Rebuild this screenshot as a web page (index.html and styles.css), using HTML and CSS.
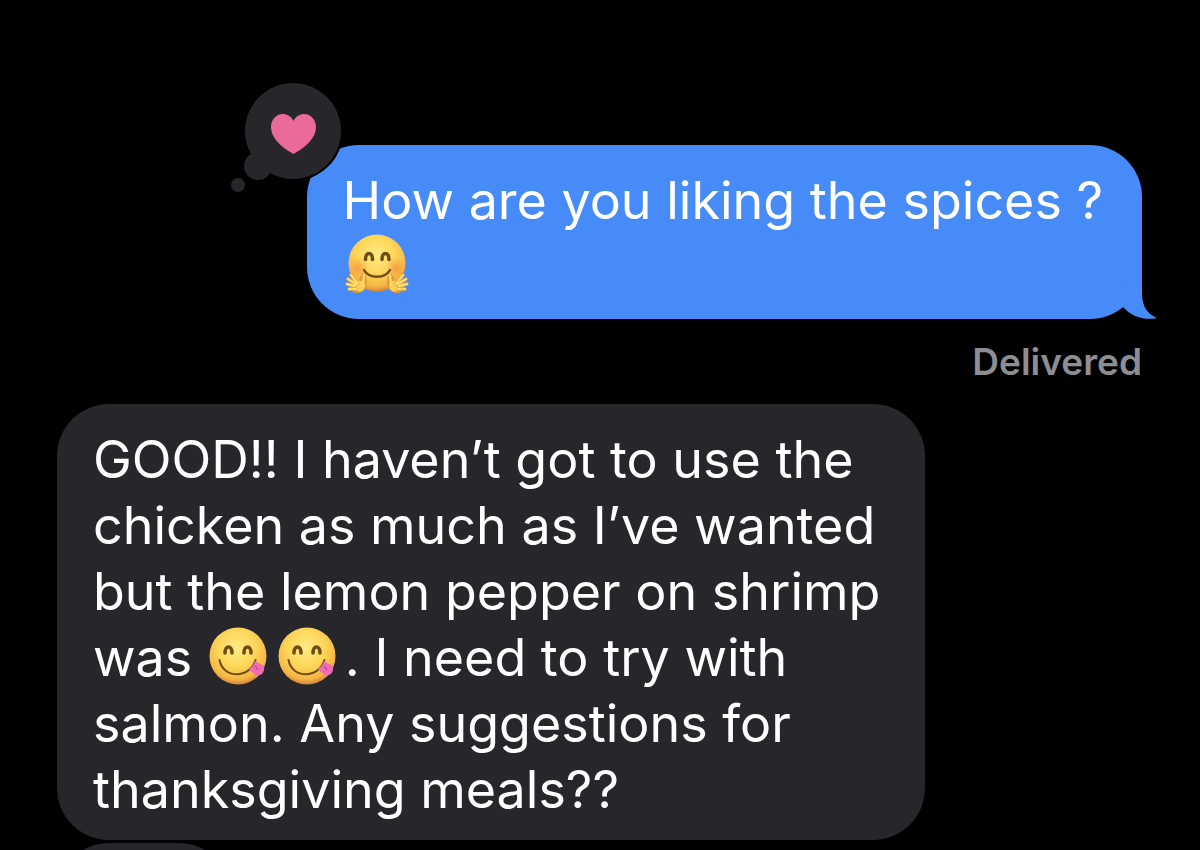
FILE: index.html
```html
<!DOCTYPE html>
<html lang="en">
<head>
    <meta charset="UTF-8">
    <meta name="viewport" content="width=device-width, initial-scale=1.0">
    <title>Messages</title>
    <link rel="stylesheet" href="styles.css">
</head>
<body>
    <!-- shared emoji drawings -->
    <svg class="defs" aria-hidden="true">
        <defs>
            <radialGradient id="skin" cx="48%" cy="36%" r="64%">
                <stop offset="0" stop-color="#ffeb85"/>
                <stop offset="0.5" stop-color="#fdd75a"/>
                <stop offset="0.85" stop-color="#f6b744"/>
                <stop offset="1" stop-color="#d3863a"/>
            </radialGradient>
            <radialGradient id="blush">
                <stop offset="0" stop-color="#f4863a" stop-opacity="0.6"/>
                <stop offset="1" stop-color="#f4863a" stop-opacity="0"/>
            </radialGradient>
            <symbol id="yum" viewBox="0 0 60 60">
                <circle cx="30" cy="30" r="28.5" fill="url(#skin)"/>
                <g fill="none" stroke="#6f4d16" stroke-linecap="round">
                    <path stroke-width="3.6" d="M17 27C17 19 24 19 24 27M36 27C36 19 43 19 43 27"/>
                    <path stroke-width="2" d="M11.500 34C15 53 42 53 47.500 34"/>
                </g>
                <path fill="#ee6db4" d="M47 35L56 40C57 45 54 50 50 49C47 49 44 47 41 43C44 41 46 39 47 35Z"/>
                <path fill="none" stroke="#c93d88" stroke-width="1.2" d="M47 40L50 44"/>
            </symbol>
            <symbol id="hug" viewBox="0 0 66 62">
                <circle cx="33" cy="30" r="28.5" fill="url(#skin)"/>
                <circle cx="14" cy="35" r="11" fill="url(#blush)"/>
                <circle cx="52" cy="35" r="11" fill="url(#blush)"/>
                <g fill="none" stroke="#6f4d16" stroke-linecap="round">
                    <path stroke-width="3.6" d="M21.500 26.500C21.500 18.500 28.500 18.500 28.500 26.500M38 26.500C38 18.500 45 18.500 45 26.500"/>
                    <path stroke-width="2.4" d="M20 37C25 46 41 46 46 37"/>
                </g>
                <g id="hand" transform="translate(2 -1)">
                    <path fill="#e2983a" d="M18 41C22 45 21 53 19 57C16 62 8 62 6 59L11 54C14 45 15 42 18 41Z"/>
                    <ellipse cx="13.500" cy="54" rx="5.500" ry="5.500" fill="#fbd057"/>
                    <path fill="none" stroke="#e2983a" stroke-width="3.4" stroke-linecap="round" d="M12 52L5 43M10 52L2 47M9 54L1 52M10 57L3 57"/>
                    <path fill="none" stroke="#ffdb67" stroke-width="2.4" stroke-linecap="round" d="M18 43L17 53M12 52L5 43M10 52L2 47M9 54L1 52M10 57L3 57"/>
                </g>
                <use href="#hand" transform="matrix(-1 0 0 1 66 0)"/>
            </symbol>
        </defs>
    </svg>

    <main class="thread">
        <div class="bubble sent">
            <p>How are you liking the spices ?<br><svg class="emoji hug" role="img" aria-label="hugging face"><use href="#hug"/></svg></p>
            <svg class="tail" viewBox="0 0 48 59" aria-hidden="true">
                <path d="M32 0V33C32 46 37 54 47 58C34 61 21 56 13 47L10 20V0Z"/>
            </svg>
            <svg class="reaction" viewBox="0 0 116 116" role="img" aria-label="Loved">
                <circle class="ring" cx="65" cy="51" r="50"/>
                <circle cx="65" cy="51" r="48"/>
                <circle cx="30" cy="86" r="14"/>
                <circle cx="10" cy="105" r="7"/>
                <path class="heart" d="M65.500 41C68 36 72 34 76 34C83 34 88 40 88 47C88 58 78 67 65.500 74C53 67 43 58 43 47C43 40 48 34 55 34C59 34 63 36 65.500 41Z"/>
            </svg>
        </div>
        <p class="status">Delivered</p>
        <div class="bubble received">
            <p>GOOD!! I haven’t got to use the<br>chicken as much as I’ve wanted<br>but the lemon pepper on shrimp<br>was <svg class="emoji" role="img" aria-label="yum"><use href="#yum"/></svg><svg class="emoji" role="img" aria-label="yum"><use href="#yum"/></svg>. I need to try with<br>salmon. Any suggestions for<br>thanksgiving meals??</p>
        </div>
        <div class="bubble received next"></div>
    </main>
</body>
</html>
```
FILE: styles.css
```css
* {
    margin: 0;
    padding: 0;
    box-sizing: border-box;
}

body {
    background: #000;
    color: #fff;
    font-family: Inter, "Liberation Sans", sans-serif;
}

.defs {
    position: absolute;
    width: 0;
    height: 0;
}

.thread {
    display: flex;
    flex-direction: column;
    height: 100vh;
    padding: 145px 58px 0 57px;
    overflow: hidden;
}

.bubble {
    position: relative;
    flex-shrink: 0;
    padding: 23px 0 17px 36px;
    border-radius: 52px;
    font-size: 52px;
    line-height: 66px;
    white-space: nowrap;
}

.sent {
    align-self: flex-end;
    width: 77%;
    padding-bottom: 19px;
    background: #468bf8;
}

.received {
    width: 80%;
    background: #27262b;
}

.next {
    width: 16%;
    height: 106px;
    margin-top: 3px;
}

.emoji {
    display: inline-block;
    width: 60px;
    height: 60px;
    margin: -6px 8px -6px 1px;
    vertical-align: -4px;
}

.hug {
    width: 66px;
    height: 62px;
}

.tail {
    position: absolute;
    right: -16px;
    bottom: 0;
    width: 48px;
    height: 59px;
    fill: #468bf8;
}

.reaction {
    position: absolute;
    left: -79px;
    top: -65px;
    width: 116px;
    height: 116px;
    fill: #27262b;
}

.reaction .ring {
    fill: #000;
}

.reaction .heart {
    fill: #ea6a9a;
}

.status {
    flex-shrink: 0;
    margin: 21px 0 20px;
    color: #8e8d93;
    font-size: 37px;
    font-weight: 600;
    line-height: 44px;
    text-align: right;
}
```
